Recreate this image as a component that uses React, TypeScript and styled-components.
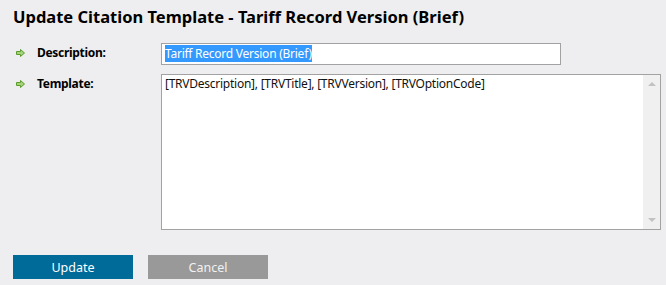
import * as React from 'react';
import styled, { createGlobalStyle } from 'styled-components';

const GlobalStyle = createGlobalStyle`
  body {
    margin: 0;
    background: #eeeef0;
    font-family: "Noto Sans", "Open Sans", sans-serif;
    color: #000;
  }
`;

const Page = styled.div`
  width: 666px;
  height: 285px;
  box-sizing: border-box;
  padding: 6px 0 0 13px;
  display: flex;
  flex-direction: column;
`;

const Title = styled.h1`
  margin: 0;
  font-size: 16.5px;
  line-height: 22px;
  font-weight: 700;
`;

const Form = styled.div`
  margin-top: 15px;
  display: grid;
  grid-template-columns: 148px auto;
  row-gap: 9px;
  justify-content: start;
`;

const Label = styled.div`
  display: flex;
  align-items: flex-start;
  gap: 12px;
  padding: 2px 0 0 3px;
  font-size: 12px;
  letter-spacing: -0.3px;
  line-height: 16px;
  font-weight: 700;
`;

const Arrow = () => (
  <svg width="9" height="8" viewBox="0 0 9 8" style={{ marginTop: 4, flex: 'none' }}>
    <path d="M0.5 2.5 H4.5 V0.5 L8.5 4 L4.5 7.5 V5.5 H0.5 Z" fill="#a6d37a" stroke="#5b9a2c" strokeWidth="1" />
  </svg>
);

const FakeInput = styled.div`
  width: 400px;
  height: 22px;
  box-sizing: border-box;
  border: 1px solid #a2a2a2;
  background: #fff;
  padding: 2px 3px;
  font-size: 12px;
  letter-spacing: -0.25px;
  line-height: 16px;
  white-space: nowrap;
`;

const Selected = styled.span`
  background: #3399ff;
  color: #fff;
`;

const TextBox = styled.div`
  width: 500px;
  height: 156px;
  box-sizing: border-box;
  border: 1px solid #a2a2a2;
  background: #fff;
  display: grid;
  grid-template-columns: 1fr 17px;
`;

const TextContent = styled.div`
  padding: 1px 3px;
  font-size: 12px;
  letter-spacing: -0.25px;
  line-height: 16px;
  color: #111;
`;

const ScrollTrack = styled.div`
  background: #f0f0f0;
  display: flex;
  flex-direction: column;
  justify-content: space-between;
  align-items: center;
  padding: 7px 0;
`;

const ScrollArrow = styled.div<{ $down?: boolean }>`
  width: 0;
  height: 0;
  border-left: 4px solid transparent;
  border-right: 4px solid transparent;
  ${(p) => (p.$down ? 'border-top: 4px solid #c2c2c2;' : 'border-bottom: 4px solid #c2c2c2;')}
`;

const Buttons = styled.div`
  margin-top: 25px;
  display: flex;
  gap: 15px;
`;

const Button = styled.button<{ $primary?: boolean }>`
  width: 120px;
  height: 24px;
  border: none;
  padding: 0;
  font-family: inherit;
  font-size: 12.5px;
  color: ${(p) => (p.$primary ? '#fff' : '#f2f2f2')};
  background: ${(p) => (p.$primary ? '#006a99' : '#999999')};
  cursor: pointer;
`;

export default function App() {
  return (
    <>
      <GlobalStyle />
      <Page>
        <Title>Update Citation Template - Tariff Record Version (Brief)</Title>
        <Form>
          <Label><Arrow />Description:</Label>
          <FakeInput><Selected>Tariff Record Version (Brief)</Selected></FakeInput>
          <Label><Arrow />Template:</Label>
          <TextBox>
            <TextContent>[TRVDescription], [TRVTitle], [TRVVersion], [TRVOptionCode]</TextContent>
            <ScrollTrack>
              <ScrollArrow />
              <ScrollArrow $down />
            </ScrollTrack>
          </TextBox>
        </Form>
        <Buttons>
          <Button $primary>Update</Button>
          <Button>Cancel</Button>
        </Buttons>
      </Page>
    </>
  );
}
